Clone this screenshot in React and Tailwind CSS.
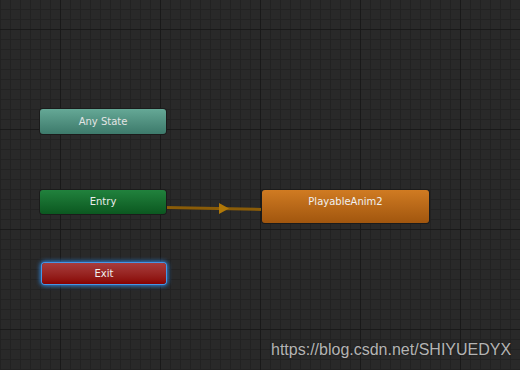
import React from "react";

const W = 520;
const H = 370;

function Grid() {
  const minorX = [];
  for (let x = 0; x <= W; x += 10) minorX.push(x);
  const minorY = [];
  for (let y = 9; y <= H; y += 10) minorY.push(y);
  const majorX = [60, 160, 260, 360, 460];
  const majorY = [29, 129, 229, 329];

  return (
    <svg className="absolute inset-0" width={W} height={H}>
      {minorX.map((x) => (
        <line key={"vx" + x} x1={x + 0.5} y1={0} x2={x + 0.5} y2={H} stroke="#222222" strokeWidth="1" />
      ))}
      {minorY.map((y) => (
        <line key={"hy" + y} x1={0} y1={y + 0.5} x2={W} y2={y + 0.5} stroke="#222222" strokeWidth="1" />
      ))}
      {majorX.map((x) => (
        <line key={"mx" + x} x1={x + 0.5} y1={0} x2={x + 0.5} y2={H} stroke="#191919" strokeWidth="1" />
      ))}
      {majorY.map((y) => (
        <line key={"my" + y} x1={0} y1={y + 0.5} x2={W} y2={y + 0.5} stroke="#191919" strokeWidth="1" />
      ))}
    </svg>
  );
}

function Transition() {
  return (
    <svg className="absolute inset-0" width={W} height={H}>
      <line x1="165" y1="207.5" x2="263" y2="209.5" stroke="#8a5c08" strokeWidth="3" />
      <polygon points="219,203 229,208.5 219,214" fill="#b07808" />
    </svg>
  );
}

// state nodes sit on a free canvas, so they keep absolute coordinates
const node =
  "absolute rounded-[3px] flex justify-center font-['DejaVu_Sans',sans-serif] text-[10px] leading-[12px]";

export default function App() {
  return (
    <div className="relative w-[520px] h-[370px] overflow-hidden bg-[#292929]">
      <Grid />
      <Transition />

      {/* Any State */}
      <div
        className={`${node} items-center left-[40px] top-[109px] w-[126px] h-[25px] bg-gradient-to-b from-[#65a896] to-[#3d7a6b] shadow-[0_0_0_1px_#1b1b1b] text-[#e4e4e4]`}
      >
        Any State
      </div>

      {/* Entry */}
      <div
        className={`${node} items-center left-[40px] top-[190px] w-[126px] h-[24px] bg-gradient-to-b from-[#21823d] to-[#0b5820] shadow-[0_0_0_1px_#1b1b1b] text-[#ececec]`}
      >
        Entry
      </div>

      {/* Exit (selected) */}
      <div
        className={`${node} items-center left-[42px] top-[263px] w-[124px] h-[21px] bg-gradient-to-b from-[#a83c3c] to-[#880000] shadow-[0_0_0_1px_#4596e6,0_0_4px_2px_#2f7fd0] text-[#f0f0f0]`}
      >
        Exit
      </div>

      {/* PlayableAnim2 */}
      <div
        className={`${node} pt-[6px] left-[262px] top-[190px] w-[167px] h-[33px] bg-gradient-to-b from-[#d07b22] to-[#a1560e] shadow-[0_0_0_1px_#1b1b1b] text-[#f0f0f0]`}
      >
        PlayableAnim2
      </div>

      {/* watermark */}
      <div className="absolute left-[271px] top-[341px] font-['Liberation_Sans',Arial,sans-serif] text-[16px] leading-[18px] text-[#b4b4b4] [text-shadow:0_0_2px_#1a1a1a]">
        https://blog.csdn.net/SHIYUEDYX
      </div>
    </div>
  );
}
